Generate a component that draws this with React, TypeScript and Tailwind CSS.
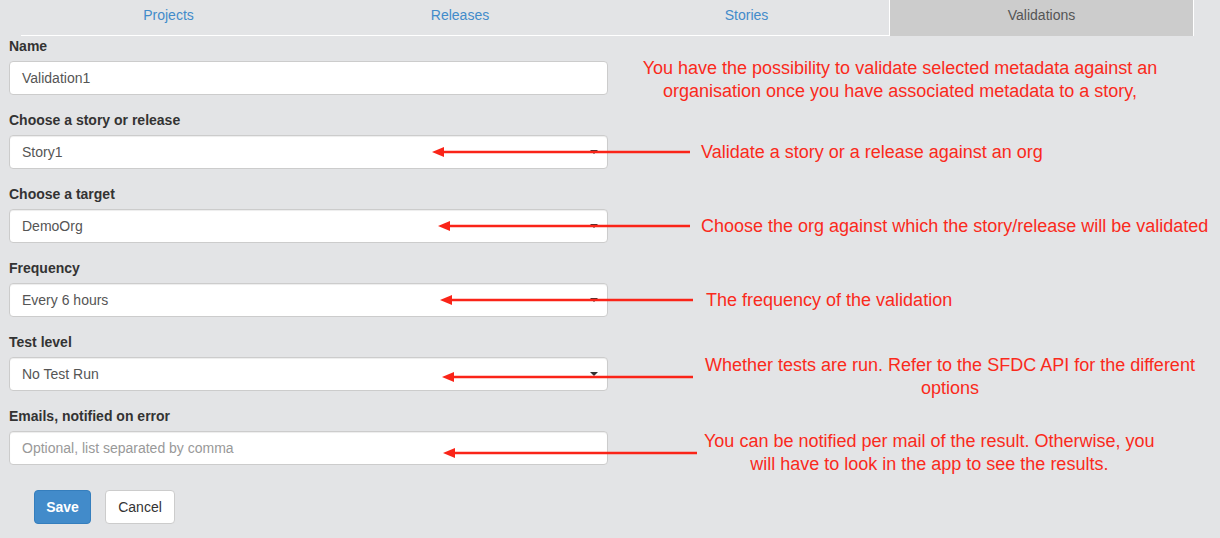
import React from "react";

const FONT = { fontFamily: '"Liberation Sans", Arial, Helvetica, sans-serif' };

type Note = {
  tip: number; // x of arrow tip, page coords
  end: number; // x where arrow line ends
  textLeft: number;
  lines: string[];
  center?: boolean;
  dy?: number;
};

function Arrow({ width }: { width: number }) {
  return (
    <svg width={width} height="12" viewBox={`0 0 ${width} 12`} className="shrink-0">
      <polygon points="0,6 12,1 12,11" fill="#fa2418" />
      <line x1="10" y1="6" x2={width} y2="6" stroke="#fa2418" strokeWidth="2.5" />
    </svg>
  );
}

function Annotation({ note }: { note: Note }) {
  // wrapper sits at x=9 on the page
  return (
    <div
      className="absolute top-0 bottom-0 flex items-center pointer-events-none"
      style={{ left: note.tip - 9, transform: `translateY(${note.dy ?? 0}px)` }}
    >
      <Arrow width={note.end - note.tip} />
      <div
        className={`text-[18px] leading-[23px] text-[#fa2a1c] whitespace-nowrap ${note.center ? "text-center" : ""}`}
        style={{ marginLeft: note.textLeft - note.end }}
      >
        {note.lines.map((l, i) => (
          <div key={i}>{l}</div>
        ))}
      </div>
    </div>
  );
}

function Caret() {
  return (
    <span className="absolute right-[10px] top-1/2 -translate-y-1/2 w-0 h-0 border-x-[4px] border-x-transparent border-t-[4px] border-t-[#333]" />
  );
}

function Field({
  label,
  value,
  placeholder,
  select,
  note,
}: {
  label: string;
  value?: string;
  placeholder?: string;
  select?: boolean;
  note?: Note;
}) {
  return (
    <div className="mb-[15px]">
      <div className="h-[20px] mb-[5px] text-[14px] leading-[20px] font-bold text-[#333]">{label}</div>
      <div className="relative w-[599px] h-[34px]">
        <div className="h-full w-full bg-white border border-[#cccccc] rounded-[4px] px-[12px] flex items-center text-[14px] shadow-[inset_0_1px_1px_rgba(0,0,0,0.075)]">
          {value ? (
            <span className="text-[#555]">{value}</span>
          ) : (
            <span className="text-[#999]">{placeholder}</span>
          )}
        </div>
        {select && <Caret />}
        {note && <Annotation note={note} />}
      </div>
    </div>
  );
}

export default function App() {
  const tabs = [
    { name: "Projects", w: 295 },
    { name: "Releases", w: 288 },
    { name: "Stories", w: 285 },
  ];

  return (
    <div className="w-[1220px] h-[538px] bg-[#e3e4e6] overflow-hidden" style={FONT}>
      {/* Tabs */}
      <div className="flex h-[36px] pl-[21px]">
        {tabs.map((t) => (
          <div
            key={t.name}
            className="h-full flex items-center justify-center pb-[4px] text-[14px] text-[#428bca] border-b border-white"
            style={{ width: t.w }}
          >
            {t.name}
          </div>
        ))}
        <div className="h-full w-[305px] flex items-center justify-center pb-[5px] text-[14px] text-[#555] bg-[#cccccc] border-x border-white">
          Validations
        </div>
      </div>

      {/* Form */}
      <div className="px-[9px]">
        <div className="mb-[15px]">
          <div className="h-[20px] mb-[5px] text-[14px] leading-[20px] font-bold text-[#333]">Name</div>
          <div className="relative w-[599px] h-[34px]">
            <div className="h-full w-full bg-white border border-[#cccccc] rounded-[4px] px-[12px] flex items-center text-[14px] text-[#555]">
              Validation1
            </div>
            <div className="absolute top-[-4px] left-[611px] w-[560px] text-center text-[18px] leading-[23px] text-[#fa2a1c] whitespace-nowrap">
              <div>You have the possibility to validate selected metadata against an</div>
              <div>organisation once you have associated metadata to a story,</div>
            </div>
          </div>
        </div>

        <Field
          label="Choose a story or release"
          value="Story1"
          select
          note={{ tip: 432, end: 690, textLeft: 701, lines: ["Validate a story or a release against an org"] }}
        />
        <Field
          label="Choose a target"
          value="DemoOrg"
          select
          note={{ tip: 438, end: 690, textLeft: 701, lines: ["Choose the org against which the story/release will be validated"] }}
        />
        <Field
          label="Frequency"
          value="Every 6 hours"
          select
          note={{ tip: 440, end: 693, textLeft: 706, lines: ["The frequency of the validation"] }}
        />
        <Field
          label="Test level"
          value="No Test Run"
          select
          note={{
            tip: 442,
            end: 693,
            textLeft: 705,
            center: true,
            dy: 3,
            lines: ["Whether tests are run. Refer to the SFDC API for the different", "options"],
          }}
        />
        <Field
          label="Emails, notified on error"
          placeholder="Optional, list separated by comma"
          note={{
            tip: 443,
            end: 697,
            textLeft: 704,
            center: true,
            dy: 5,
            lines: ["You can be notified per mail of the result. Otherwise, you", "will have to look in the app to see the results."],
          }}
        />

        <div className="flex gap-[14px] pl-[25px] pt-[10px]">
          <button className="h-[34px] w-[57px] rounded-[4px] bg-[#428bca] border border-[#357ebd] text-white text-[14px] font-bold">
            Save
          </button>
          <button className="h-[34px] w-[70px] rounded-[4px] bg-white border border-[#cccccc] text-[#333] text-[14px]">
            Cancel
          </button>
        </div>
      </div>
    </div>
  );
}
